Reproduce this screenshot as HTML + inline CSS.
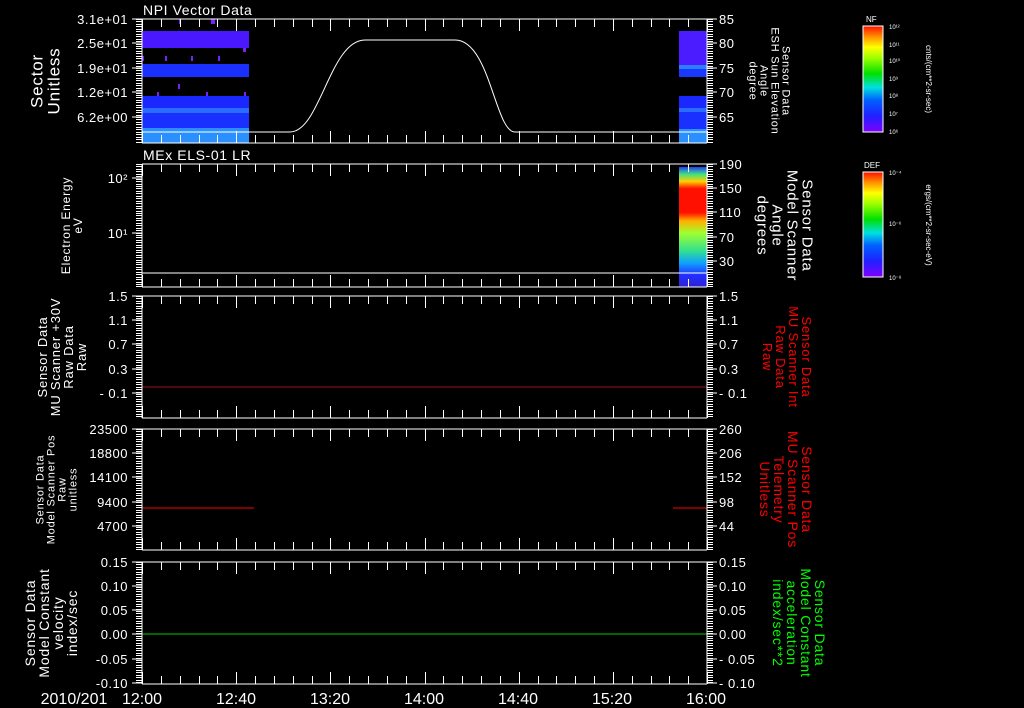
<!DOCTYPE html>
<html><head><meta charset="utf-8"><style>
html,body{margin:0;padding:0;background:#000;width:1024px;height:708px;overflow:hidden}
svg{display:block}
text{font-family:"Liberation Sans",sans-serif;fill:#fff}
</style></head><body>
<svg id="s" width="1024" height="708" xmlns="http://www.w3.org/2000/svg">
<defs>
<linearGradient id="cb" x1="0" y1="1" x2="0" y2="0">
<stop offset="0" stop-color="#8000ff"/><stop offset="0.15" stop-color="#2020ff"/><stop offset="0.3" stop-color="#0060ff"/><stop offset="0.42" stop-color="#00e0e0"/><stop offset="0.55" stop-color="#00e000"/><stop offset="0.7" stop-color="#a0ff00"/><stop offset="0.8" stop-color="#ffff00"/><stop offset="0.9" stop-color="#ff9000"/><stop offset="1" stop-color="#ff1000"/>
</linearGradient>
<linearGradient id="sp2" x1="0" y1="0" x2="0" y2="1">
<stop offset="0" stop-color="#2040ff"/><stop offset="0.06" stop-color="#40e080"/><stop offset="0.12" stop-color="#ffd000"/><stop offset="0.18" stop-color="#ff1000"/><stop offset="0.38" stop-color="#ff1000"/><stop offset="0.45" stop-color="#ffb000"/><stop offset="0.55" stop-color="#a0ff30"/><stop offset="0.7" stop-color="#30e090"/><stop offset="0.8" stop-color="#10a0ff"/><stop offset="0.9" stop-color="#2030ff"/><stop offset="1" stop-color="#3020d0"/>
</linearGradient>
</defs>
<rect x="142" y="31" width="107" height="17" fill="#4a18ff"/>
<rect x="142" y="64" width="107" height="13" fill="#1a30ff"/>
<rect x="142" y="96" width="107" height="12" fill="#1a28ff"/>
<rect x="142" y="108" width="107" height="5" fill="#2a6cff"/>
<rect x="142" y="113" width="107" height="15" fill="#1a30ff"/>
<rect x="142" y="128" width="107" height="15" fill="#2a90ff"/>
<g fill="#7a20ff"><rect x="179" y="19" width="2" height="5"/><rect x="211" y="19" width="4" height="5"/><rect x="243" y="48" width="3" height="4"/><rect x="142" y="56" width="2" height="5"/><rect x="165" y="56" width="2" height="5"/><rect x="191" y="56" width="2" height="5"/><rect x="218" y="56" width="2" height="5"/><rect x="178" y="84" width="2" height="5"/><rect x="157" y="92" width="2" height="4"/><rect x="206" y="92" width="2" height="4"/><rect x="244" y="92" width="2" height="4"/></g>
<rect x="679" y="31" width="28" height="34" fill="#4a1cff"/>
<rect x="679" y="65" width="28" height="4" fill="#2a80ff"/>
<rect x="679" y="69" width="28" height="8" fill="#1a38ff"/>
<rect x="679" y="96" width="28" height="12" fill="#1a28ff"/>
<rect x="679" y="108" width="28" height="4" fill="#2a6cff"/>
<rect x="679" y="112" width="28" height="17" fill="#1a30ff"/>
<rect x="679" y="129" width="28" height="14" fill="#2a90ff"/>
<path d="M142 132 L290 132 C320 132 330 40 365 40 L455 40 C490 40 495 132 515 132 L707 132" stroke="#fff" fill="none" stroke-width="1"/>
<rect x="679" y="167" width="28" height="120" fill="url(#sp2)"/>
<line x1="142" y1="273" x2="707" y2="273" stroke="#fff"/>
<line x1="142" y1="387" x2="707" y2="387" stroke="#a01010"/>
<line x1="142" y1="508" x2="254" y2="508" stroke="#f00"/>
<line x1="673" y1="508" x2="707" y2="508" stroke="#f00"/>
<line x1="142" y1="634" x2="707" y2="634" stroke="#0c0"/>
<g id="axes" stroke="#fff" fill="none"></g>
<g id="lab"></g>
<text x="143" y="15" font-size="14" letter-spacing="0.6">NPI Vector Data</text>
<text x="143" y="160" font-size="14" letter-spacing="0.6">MEx ELS-01 LR</text>
<rect x="863" y="26" width="20" height="106" fill="url(#cb)" stroke="#fff"/>
<text x="866" y="22" font-size="8">NF</text>
<rect x="863" y="172" width="20" height="105" fill="url(#cb)" stroke="#fff"/>
<text x="864" y="168" font-size="8">DEF</text>
<g font-size="6">
<text x="889" y="29">10¹²</text><text x="889" y="47">10¹¹</text><text x="889" y="63">10¹⁰</text><text x="889" y="81">10⁹</text><text x="889" y="98">10⁸</text><text x="889" y="116">10⁷</text><text x="889" y="134">10⁶</text>
<text x="889" y="175">10⁻⁴</text><text x="889" y="226">10⁻⁶</text><text x="889" y="280">10⁻⁸</text>
</g>
<text transform="translate(926,79) rotate(90)" font-size="8" text-anchor="middle">cnts/(cm**2-sr-sec)</text>
<text transform="translate(926,225) rotate(90)" font-size="8" text-anchor="middle">ergs/(cm**2-sr-sec-eV)</text>
<g font-size="16" text-anchor="middle">
<text x="74" y="704">2010/201</text>
<text x="142" y="704">12:00</text><text x="236" y="704">12:40</text><text x="330" y="704">13:20</text><text x="424" y="704">14:00</text><text x="518" y="704">14:40</text><text x="612" y="704">15:20</text><text x="706" y="704">16:00</text>
</g>
</svg>
<script>
const NS="http://www.w3.org/2000/svg";
const ax=document.getElementById('axes'),lab=document.getElementById('lab');
function el(p,t,a,txt){const e=document.createElementNS(NS,t);for(const k in a)e.setAttribute(k,a[k]);if(txt!=null)e.textContent=txt;p.appendChild(e);return e}
const panels=[
 {t:19,b:143,L:[["3.1e+01",19],["2.5e+01",43],["1.9e+01",68],["1.2e+01",92],["6.2e+00",117]],R:[["85",19],["80",43],["75",68],["70",92],["65",117]],
  ll:["Sector","Unitless"],lfs:17,lx:45,rl:["Sensor Data","ESH Sun Elevation","Angle","degree"],rfs:11,rx:770,rc:"#fff"},
 {t:164,b:287,L:[["10\u00b2",178],["10\u00b9",233]],R:[["190",164],["150",188],["110",212],["70",237],["30",261]],
  ll:["Electron Energy","eV"],lfs:12,lx:72,rl:["Sensor Data","Model Scanner","Angle","degrees"],rfs:15,rx:785,rc:"#fff"},
 {t:296,b:418,L:[["1.5",296],["1.1",320],["0.7",344],["0.3",369],["- 0.1",393]],R:[["1.5",296],["1.1",320],["0.7",344],["0.3",369],["- 0.1",393]],
  ll:["Sensor Data","MU Scanner +30V","Raw Data","Raw"],lfs:13,lx:62,rl:["Sensor Data","MU Scanner Int","Raw Data","Raw"],rfs:13,rx:787,rc:"#f00"},
 {t:429,b:550,L:[["23500",429],["18800",453],["14100",477],["9400",502],["4700",526]],R:[["260",429],["206",453],["152",477],["98",502],["44",526]],
  ll:["Sensor Data","Model Scanner Pos","Raw","unitless"],lfs:11,lx:56,rl:["Sensor Data","MU Scanner Pos","Telemetry","Unitless"],rfs:14,rx:786,rc:"#f00"},
 {t:562,b:684,L:[["0.15",562],["0.10",586],["0.05",610],["0.00",634],["-0.05",659],["-0.10",683]],R:[["0.15",562],["0.10",586],["0.05",610],["0.00",634],["- 0.05",659],["- 0.10",683]],
  ll:["Sensor Data","Model Constant","velocity","index/sec"],lfs:14,lx:51,rl:["Sensor Data","Model Constant","acceleration","index/sec**2"],rfs:14,rx:799,rc:"#0f0"}
];
let d="";
for(const p of panels){
 d+=`M142 ${p.t}H707M142 ${p.b}H707M142 ${p.t}V${p.b}M707 ${p.t}V${p.b}`;
 for(let i=0;i<=30;i++){const x=Math.round(142+i*565/30)+0.5;const len=(i%5==0)?12:8;d+=`M${x} ${p.t}v${len}M${x} ${p.b}v${-len}`;}
 for(let y=p.t;y<=p.b;y+=2.45){const yy=Math.round(y)+0.5;d+=`M136 ${yy}h6M707 ${yy}h6`;}
 for(const [s,y] of p.L){d+=`M132 ${y}h10`;el(lab,'text',{x:128,y:y+5,'font-size':13,'text-anchor':'end','letter-spacing':0.5},s);}
 for(const [s,y] of p.R){d+=`M707 ${y}h10`;el(lab,'text',{x:719,y:y+5,'font-size':13,'letter-spacing':0.5},s);}
 const cy=(p.t+p.b)/2;
 const n=p.ll.length, lh=p.lfs*1.0;
 const g=el(lab,'text',{transform:`translate(${p.lx-((n-1)*lh)/2+lh*0.35},${cy}) rotate(-90)`,'font-size':p.lfs,'text-anchor':'middle','letter-spacing':0.8});
 p.ll.forEach((s,i)=>el(g,'tspan',{x:0,dy:i==0?0:lh},s));
 const m=p.rl.length, rh=p.rfs*1.0;
 const g2=el(lab,'text',{transform:`translate(${p.rx+((m-1)*rh)/2-rh*0.35},${cy}) rotate(90)`,'font-size':p.rfs,'text-anchor':'middle','letter-spacing':0.8,style:`fill:${p.rc}`});
 p.rl.forEach((s,i)=>el(g2,'tspan',{x:0,dy:i==0?0:rh},s));
}
el(ax,'path',{d:d,'stroke-width':1});
</script>
</body></html>
